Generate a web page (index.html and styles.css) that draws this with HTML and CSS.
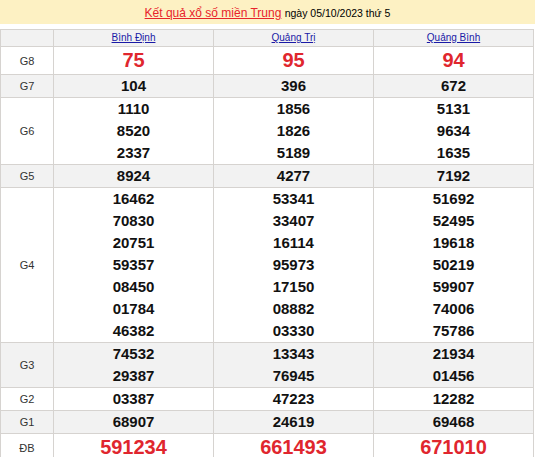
FILE: index.html
```html
<!DOCTYPE html>
<html lang="vi">
<head>
<meta charset="utf-8">
<title>Kết quả xổ số miền Trung</title>
<link rel="stylesheet" href="styles.css">
</head>
<body>
<div class="title"><a href="#" class="title-link">Kết quả xổ số miền Trung</a> <span class="title-date">ngày 05/10/2023 thứ 5</span></div>
<table class="kq">
  <colgroup><col class="c-label"><col class="c-prov"><col class="c-prov"><col class="c-prov"></colgroup>
  <tr class="head">
    <td></td>
    <td><a href="#">Bình Định</a></td>
    <td><a href="#">Quảng Trị</a></td>
    <td><a href="#">Quảng Bình</a></td>
  </tr>
  <tr class="g8">
    <td class="lbl">G8</td>
    <td><div class="n big">75</div></td>
    <td><div class="n big">95</div></td>
    <td><div class="n big">94</div></td>
  </tr>
  <tr class="alt">
    <td class="lbl">G7</td>
    <td><div class="n">104</div></td>
    <td><div class="n">396</div></td>
    <td><div class="n">672</div></td>
  </tr>
  <tr>
    <td class="lbl">G6</td>
    <td><div class="n">1110</div><div class="n">8520</div><div class="n">2337</div></td>
    <td><div class="n">1856</div><div class="n">1826</div><div class="n">5189</div></td>
    <td><div class="n">5131</div><div class="n">9634</div><div class="n">1635</div></td>
  </tr>
  <tr class="alt">
    <td class="lbl">G5</td>
    <td><div class="n">8924</div></td>
    <td><div class="n">4277</div></td>
    <td><div class="n">7192</div></td>
  </tr>
  <tr>
    <td class="lbl">G4</td>
    <td><div class="n">16462</div><div class="n">70830</div><div class="n">20751</div><div class="n">59357</div><div class="n">08450</div><div class="n">01784</div><div class="n">46382</div></td>
    <td><div class="n">53341</div><div class="n">33407</div><div class="n">16114</div><div class="n">95973</div><div class="n">17150</div><div class="n">08882</div><div class="n">03330</div></td>
    <td><div class="n">51692</div><div class="n">52495</div><div class="n">19618</div><div class="n">50219</div><div class="n">59907</div><div class="n">74006</div><div class="n">75786</div></td>
  </tr>
  <tr class="alt">
    <td class="lbl">G3</td>
    <td><div class="n">74532</div><div class="n">29387</div></td>
    <td><div class="n">13343</div><div class="n">76945</div></td>
    <td><div class="n">21934</div><div class="n">01456</div></td>
  </tr>
  <tr>
    <td class="lbl">G2</td>
    <td><div class="n">03387</div></td>
    <td><div class="n">47223</div></td>
    <td><div class="n">12282</div></td>
  </tr>
  <tr class="alt">
    <td class="lbl">G1</td>
    <td><div class="n">68907</div></td>
    <td><div class="n">24619</div></td>
    <td><div class="n">69468</div></td>
  </tr>
  <tr class="db">
    <td class="lbl">ĐB</td>
    <td><div class="n big">591234</div></td>
    <td><div class="n big">661493</div></td>
    <td><div class="n big">671010</div></td>
  </tr>
</table>
</body>
</html>
```
FILE: styles.css
```css
html, body {
  margin: 0;
  padding: 0;
  background: #ffffff;
  font-family: "Liberation Sans", Arial, sans-serif;
}
.title {
  height: 24px;
  line-height: 27px;
  background: #fdf1c3;
  text-align: center;
  font-size: 12px;
  color: #111;
  margin-bottom: 5px;
}
.title-link {
  color: #e8232b;
  text-decoration: underline;
}
.title-date {
  color: #000;
  font-size: 10.5px;
}
.kq {
  border-collapse: collapse;
  table-layout: fixed;
  width: 533px;
}
.c-label { width: 53px; }
.c-prov { width: 160px; }
.kq td {
  border: 1px solid #d6d3d0;
  padding: 0;
  text-align: center;
  vertical-align: middle;
}
.head td {
  background: #f2f2f2;
  height: 16px;
  font-size: 10px;
  line-height: 16px;
}
.head a {
  color: #1a1aa6;
  text-decoration: underline;
}
.alt td {
  background: #f2f2f2;
}
.lbl {
  font-size: 11px;
  color: #333;
}
.n {
  font-size: 15px;
  font-weight: bold;
  line-height: 22px;
  color: #111;
}
.n.big {
  font-size: 20px;
  line-height: 27px;
  color: #e0262e;
}
```
